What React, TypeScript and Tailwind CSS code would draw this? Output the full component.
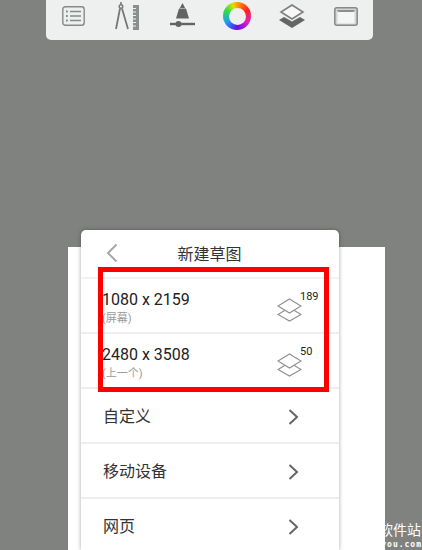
import React from 'react';

const cjk = 'Roboto, "Noto Sans CJK SC", sans-serif';

const ListIcon = () => (
  <svg width="23" height="20" viewBox="0 0 23 20" fill="none" stroke="#858a88" strokeWidth="1.4">
    <rect x="0.8" y="0.8" width="21.4" height="18.4" rx="2.5" />
    <path d="M8 5.5h11M8 10h11M8 14.5h11" />
    <path d="M4 5.5h1.8M4 10h1.8M4 14.5h1.8" strokeWidth="2" />
  </svg>
);

const CompassIcon = () => (
  <svg width="24" height="28" viewBox="0 0 24 28" fill="none" className="ml-[30px]">
    <path d="M6 0v3" stroke="#777" strokeWidth="1.6" />
    <circle cx="6" cy="4.5" r="1.8" stroke="#777" strokeWidth="1.4" />
    <path d="M5 6.5L1 27M7 6.5l6 20.5" stroke="#777" strokeWidth="1.8" />
    <rect x="18" y="3" width="6" height="25" fill="#8a8f8d" />
    <path d="M18 6.5h3M18 10h3M18 13.5h3M18 17h3M18 20.5h3M18 24h3" stroke="#eef0ef" strokeWidth="1" />
  </svg>
);

const BrushSizeIcon = () => (
  <svg width="25" height="26" viewBox="0 0 25 26" fill="#616462" className="ml-[31px]">
    <path d="M12.5 0l2.6 5h-5.2z" />
    <path d="M9 5.5h7l3 10H6z" />
    <rect x="0" y="19.8" width="25" height="2.4" />
    <circle cx="8.5" cy="21" r="3" />
  </svg>
);

const ColorWheel = () => (
  <div className="ml-[28px] w-7 h-7 rounded-full bg-[conic-gradient(#ffa000,#ff2020_60deg,#e020c0_120deg,#6010f0_180deg,#20a0f0_240deg,#30e040_300deg,#e0e000_340deg,#ffa000)] flex items-center justify-center">
    <div className="w-[17px] h-[17px] rounded-full bg-[#eef0ef]" />
  </div>
);

const LayersSolid = () => (
  <svg width="26" height="24" viewBox="0 0 26 24" className="ml-[28px]">
    <path d="M0 16l5-3 8 4.5 8-4.5 5 3-13 8z" fill="#636664" />
    <path d="M13 1l11 7-11 7L2 8z" fill="#f6f7f6" stroke="#7c7f7d" strokeWidth="1.6" />
  </svg>
);

const CanvasIcon = () => (
  <svg width="24" height="19" viewBox="0 0 24 19" fill="none" className="ml-[29px]">
    <rect x="0.8" y="0.8" width="22.4" height="17.4" rx="2" fill="#d2d5d4" stroke="#858987" strokeWidth="1.5" />
    <path d="M3 3h18l-1.5 2h-15z" fill="#8a8e8d" />
    <rect x="3.5" y="5" width="17" height="11.5" fill="#f4f6f5" />
  </svg>
);

const LayersOutline = () => (
  <svg width="25" height="24" viewBox="0 0 25 24" fill="#fff" stroke="#8f8f8f" strokeWidth="1.2">
    <path d="M12.5 9.5l11.5 7-11.5 6.5L1 16.5z" />
    <path d="M12.5 1l11.5 7-11.5 7L1 8z" />
  </svg>
);

const SizeRow = ({ size, note, count }: { size: string; note: string; count: number }) => (
  <div className="h-[55px] border-b-2 border-[#eeeeee] flex items-center justify-between pl-[21px] pr-[20px]">
    <div className="flex flex-col mt-[5px]">
      <span className="text-[16px] leading-[20px] text-[#222]">{size}</span>
      <span className="text-[11px] leading-[15px] mt-[1px] text-[#9a9a9a]">{note}</span>
    </div>
    <div className="relative mr-[17px] mt-[9px]">
      <LayersOutline />
      <span className="absolute left-[23px] top-[-8px] text-[11px] leading-[14px] text-[#222]">{count}</span>
    </div>
  </div>
);

const MenuRow = ({ label }: { label: string }) => (
  <div className="h-[55px] border-b-2 border-[#eeeeee] flex items-center justify-between pl-[22px] pr-[40px] pt-[2px]">
    <span className="text-[16px] text-[#333]">{label}</span>
    <svg width="11" height="16" viewBox="0 0 11 16" fill="none" stroke="#666" strokeWidth="2">
      <path d="M1.5 1l7.5 7-7.5 7" />
    </svg>
  </div>
);

export default function App() {
  return (
    <div className="relative w-[422px] h-[550px] overflow-hidden bg-[#808280]" style={{ fontFamily: cjk }}>
      {/* top toolbar */}
      <div className="ml-[46px] w-[327px] h-[40px] bg-[#eef0ef] rounded-b-[5px] flex items-center pl-[16px] pb-[8px]">
        <ListIcon />
        <CompassIcon />
        <BrushSizeIcon />
        <ColorWheel />
        <LayersSolid />
        <CanvasIcon />
      </div>

      {/* sheet behind the dialog */}
      <div className="absolute left-[68px] top-[247px] w-[317px] h-[303px] bg-white" />

      {/* dialog */}
      <div className="absolute left-[81px] top-[230px] w-[258px] h-[320px] bg-white rounded-t-[5px] shadow-[0_0_4px_rgba(0,0,0,0.35)]">
        <div className="relative h-[49px] border-b-2 border-[#f2f2f2] flex items-center justify-center pt-[2px]">
          <svg className="absolute left-[25px] top-[13px]" width="12" height="20" viewBox="0 0 12 20" fill="none" stroke="#a8a8a8" strokeWidth="2">
            <path d="M10.5 1.5L2 10l8.5 8.5" />
          </svg>
          <span className="text-[16px] text-[#333] mr-[1px]">新建草图</span>
        </div>
        <SizeRow size="1080 x 2159" note="(屏幕)" count={189} />
        <SizeRow size="2480 x 3508" note="(上一个)" count={50} />
        <MenuRow label="自定义" />
        <MenuRow label="移动设备" />
        <MenuRow label="网页" />
      </div>

      {/* red annotation box */}
      <div className="absolute left-[98px] top-[267px] w-[231px] h-[125px] border-[5px] border-[#ff0000]" />

      {/* watermark */}
      <div className="absolute right-0 bottom-0 w-[60px] text-right text-white">
        <div className="text-[14px] leading-[18px] pr-[1px] mb-[1px]">软件站</div>
        <div className="text-[8px] font-bold tracking-[1px] leading-[10px]" style={{ fontFamily: 'monospace' }}>you.com</div>
      </div>
    </div>
  );
}
